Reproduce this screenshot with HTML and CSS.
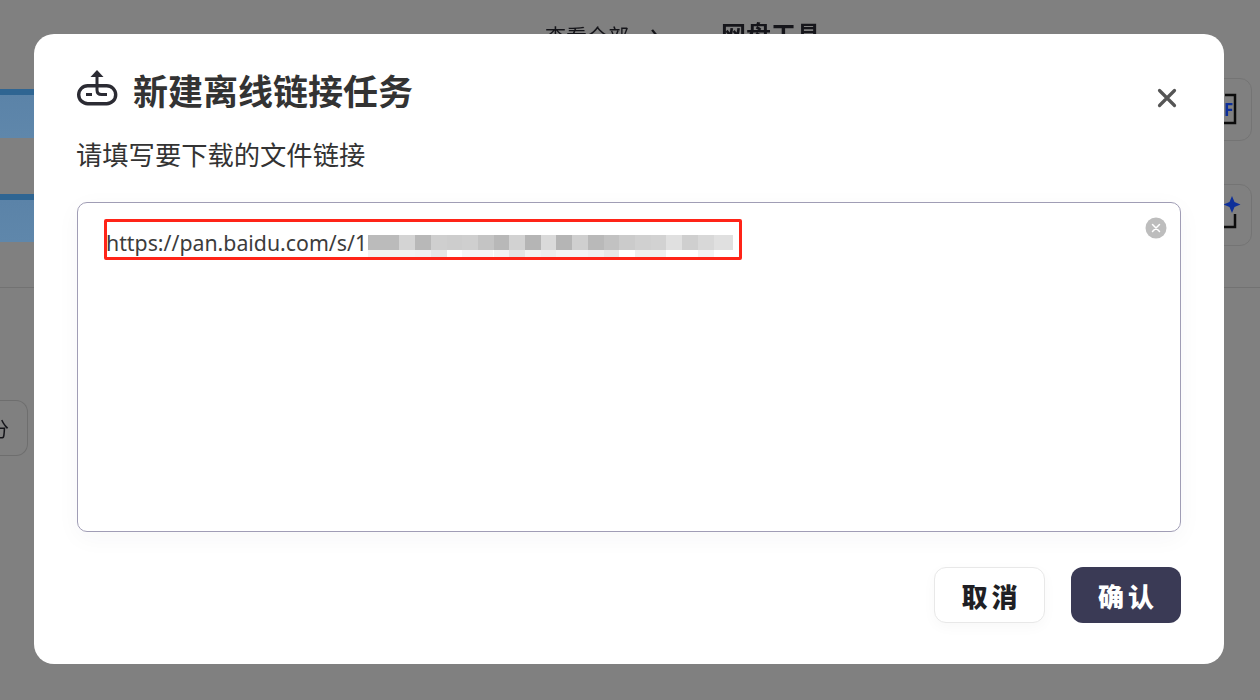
FILE: index.html
```html
<!DOCTYPE html>
<html lang="zh-CN">
<head>
<meta charset="utf-8">
<title>新建离线链接任务</title>
<link rel="stylesheet" href="styles.css">
</head>
<body>
<div class="page">
  <div class="top">
    <div class="thumbs">
      <div class="thumb"></div>
      <div class="thumb"></div>
    </div>
    <div class="section-head">
      <span class="all">查看全部</span>
      <span class="chev">›</span>
      <span class="section-title">网盘工具</span>
    </div>
    <div class="tools">
      <div class="tool">
        <svg class="tool-icon" width="40" height="40" viewBox="0 0 40 40"><path d="M28 6H38V34H24" fill="none" stroke="#0c0c0c" stroke-width="2.500"/><text x="27" y="27" class="tool-f">F</text></svg>
      </div>
      <div class="tool">
        <svg class="tool-icon" width="40" height="40" viewBox="0 0 40 40"><path d="M38 19V32H24" fill="none" stroke="#0c0c0c" stroke-width="2.500"/><path d="M35 1l2.500 6 6 2.500-6 2.500-2.500 6-2.500-6-6-2.500 6-2.500z" fill="#0d2f9a"/></svg>
      </div>
    </div>
  </div>
  <div class="bottom">
    <div class="chip"><span>分</span></div>
  </div>
</div>

<div class="overlay">
  <div class="modal">
    <div class="modal-head">
      <div class="title-row">
        <svg class="title-icon" width="42" height="38" viewBox="0 0 42 38">
          <rect x="2.700" y="15.700" width="37" height="18" rx="9" fill="none" stroke="#2b2b33" stroke-width="3.400"/>
          <path d="M21 5v15q0 4.500 4.500 4.500H31" fill="none" stroke="#2b2b33" stroke-width="3"/>
          <path d="M21 0l6.500 7h-13z" fill="#2b2b33"/>
          <path d="M10 24.500h6" fill="none" stroke="#2b2b33" stroke-width="3"/>
        </svg>
        <h1 class="title">新建离线链接任务</h1>
      </div>
      <svg class="close" width="20" height="20" viewBox="0 0 20 20"><path d="M2.500 2.500l15 15M17.500 2.500l-15 15" stroke="#555" stroke-width="3.200" stroke-linecap="round"/></svg>
    </div>
    <p class="hint">请填写要下载的文件链接</p>
    <div class="field">
      <div class="url">https://pan.baidu.com/s/1</div>
      <svg class="mosaic" width="365" height="23" viewBox="0 0 365 23" shape-rendering="crispEdges">
        <g>
          <rect x="0" width="16" height="15" fill="#bbb"/><rect x="16" width="16" height="15" fill="#bbb"/><rect x="31" width="16" height="15" fill="#d4d4d4"/><rect x="47" width="16" height="15" fill="#b8b8b8"/><rect x="63" width="16" height="15" fill="#cfcfcf"/><rect x="79" width="16" height="15" fill="#cdcdcd"/><rect x="94" width="16" height="15" fill="#cfcfcf"/><rect x="110" width="16" height="15" fill="#c4c4c4"/><rect x="126" width="16" height="15" fill="#b8b8b8"/><rect x="141" width="16" height="15" fill="#d2d2d2"/><rect x="157" width="16" height="15" fill="#b5b5b5"/><rect x="173" width="16" height="15" fill="#dadada"/><rect x="188" width="16" height="15" fill="#b5b5b5"/><rect x="204" width="16" height="15" fill="#cfcfcf"/><rect x="220" width="16" height="15" fill="#b9b9b9"/><rect x="236" width="16" height="15" fill="#c2c2c2"/><rect x="251" width="16" height="15" fill="#cbcbcb"/><rect x="267" width="16" height="15" fill="#d0d0d0"/><rect x="283" width="16" height="15" fill="#d2d2d2"/><rect x="298" width="16" height="15" fill="#e0e0e0"/><rect x="314" width="16" height="15" fill="#cfcfcf"/><rect x="330" width="16" height="15" fill="#d8d8d8"/><rect x="346" width="19" height="15" fill="#e0e0e0"/>
        </g>
        <g>
          <rect x="0" y="15" width="47" height="7" fill="#f2f2f2"/><rect x="47" y="15" width="16" height="7" fill="#f0f0f0"/><rect x="63" y="15" width="16" height="7" fill="#e6e6e6"/><rect x="94" y="15" width="31" height="7" fill="#f6f6f6"/><rect x="126" y="15" width="15" height="7" fill="#f3f3f3"/><rect x="141" y="15" width="16" height="7" fill="#e4e4e4"/><rect x="157" y="15" width="16" height="7" fill="#f2f2f2"/><rect x="173" y="15" width="15" height="7" fill="#eee"/><rect x="188" y="15" width="32" height="7" fill="#f4f4f4"/><rect x="220" y="15" width="16" height="7" fill="#f0f0f0"/><rect x="236" y="15" width="15" height="7" fill="#e8e8e8"/><rect x="267" y="15" width="31" height="7" fill="#efefef"/><rect x="330" y="15" width="16" height="7" fill="#f3f3f3"/>
        </g>
      </svg>
      <svg class="clear" width="22" height="22" viewBox="0 0 22 22"><circle cx="11" cy="11" r="10.500" fill="#bdbdbd"/><path d="M7.500 7.500l7 7M14.500 7.500l-7 7" stroke="#fff" stroke-width="1.500" stroke-linecap="round"/></svg>
      <div class="annotation"></div>
    </div>
    <div class="actions">
      <button class="btn btn-cancel" type="button">取消</button>
      <button class="btn btn-ok" type="button">确认</button>
    </div>
  </div>
</div>
</body>
</html>
```

FILE: styles.css
```css
* {
  box-sizing: border-box;
}

html,
body {
  margin: 0;
  height: 700px;
  overflow: hidden;
}

body {
  font-family: "Noto Sans", "Noto Sans CJK SC", sans-serif;
  background: #808080;
  color: #15151a;
}

/* Dimmed page behind the dialog: colours are already darkened */
.page {
  height: 700px;
  filter: blur(0.6px);
}

.top {
  display: flex;
  justify-content: space-between;
  height: 288px;
  border-bottom: 1px solid #727272;
}

.thumbs {
  display: flex;
  flex-direction: column;
  gap: 56px;
  width: 34px;
  padding-top: 89px;
}

.thumb {
  height: 48.500px;
  background: linear-gradient(#2f6592 0 6px, #5b83a8 6px, #5f87ab);
}

.section-head {
  display: flex;
  align-items: baseline;
  height: 56px;
  margin-left: 511px;
  padding-top: 12px;
  font-size: 21px;
}

.all {
  width: 85px;
}

.chev {
  width: 91px;
  padding-left: 20px;
  font-size: 30px;
}

.section-title {
  font-size: 25px;
  font-weight: 700;
}

.tools {
  display: flex;
  flex: 1;
  flex-direction: column;
  align-items: flex-end;
  gap: 43px;
  padding: 78px 8px 0 0;
}

.tool {
  display: flex;
  align-items: center;
  justify-content: flex-end;
  width: 62px;
  height: 62.500px;
  padding-right: 14px;
  border: 1px solid #747474;
  border-radius: 12px;
}

.tool-icon {
  flex: none;
  overflow: visible;
}

.tool-f {
  font-size: 17px;
  font-weight: 700;
  fill: #0d2f9a;
}

.bottom {
  padding-top: 112px;
}

.chip {
  display: flex;
  align-items: center;
  justify-content: flex-end;
  width: 28px;
  height: 56px;
  padding-right: 18px;
  border: 1px solid #6e6e6e;
  border-left: 0;
  border-radius: 0 12px 12px 0;
  font-size: 20px;
  white-space: nowrap;
}

/* Dialog */
.overlay {
  position: fixed;
  inset: 0;
  padding: 34px 36px 36px 34px;
}

.modal {
  height: 630px;
  padding: 31px 43px 0;
  border-radius: 20px;
  background: #fff;
  color: #333;
}

.modal-head {
  display: flex;
  align-items: flex-start;
  justify-content: space-between;
}

.title-row {
  display: flex;
  align-items: center;
  gap: 15px;
}

.title-icon {
  flex: none;
  margin: -7px 0 0 -1px;
}

.title {
  margin: -1px 0 0;
  font-size: 35px;
  font-weight: 700;
  line-height: 56px;
  color: #333;
}

.close {
  margin: 23px 4px 0 0;
}

.hint {
  margin: 0 0 0 -1px;
  padding-top: 17px;
  font-size: 26.300px;
  line-height: 36px;
  color: #333;
}

.field {
  position: relative;
  height: 330px;
  margin-top: 29px;
  padding: 24px 28px;
  border: 1px solid #a09db5;
  border-radius: 10px;
  box-shadow: 0 6px 24px rgba(40, 40, 70, 0.04);
}

.url {
  font-size: 21.300px;
  line-height: 32px;
  color: #3c3c3c;
}

.mosaic {
  position: absolute;
  top: 32px;
  left: 290px;
}

.clear {
  position: absolute;
  top: 14px;
  right: 13px;
}

.annotation {
  position: absolute;
  top: 16px;
  left: 26px;
  width: 638px;
  height: 41px;
  border: 3px solid #ff2418;
  border-radius: 2px;
}

.actions {
  display: flex;
  justify-content: flex-end;
  gap: 26px;
  margin-top: 35px;
}

.btn {
  width: 110px;
  height: 56px;
  padding: 0 0 0 4px;
  border-radius: 12px;
  font-family: "Noto Sans CJK SC", sans-serif;
  font-size: 26px;
  font-weight: 900;
  letter-spacing: 4px;
}

.btn-cancel {
  width: 111px;
  border: 1px solid #e8e8e8;
  background: #fff;
  color: #1f1f24;
  box-shadow: 0 4px 14px rgba(0, 0, 0, 0.03);
}

.btn-ok {
  border: 0;
  background: #3a3a55;
  color: #fff;
}
```
